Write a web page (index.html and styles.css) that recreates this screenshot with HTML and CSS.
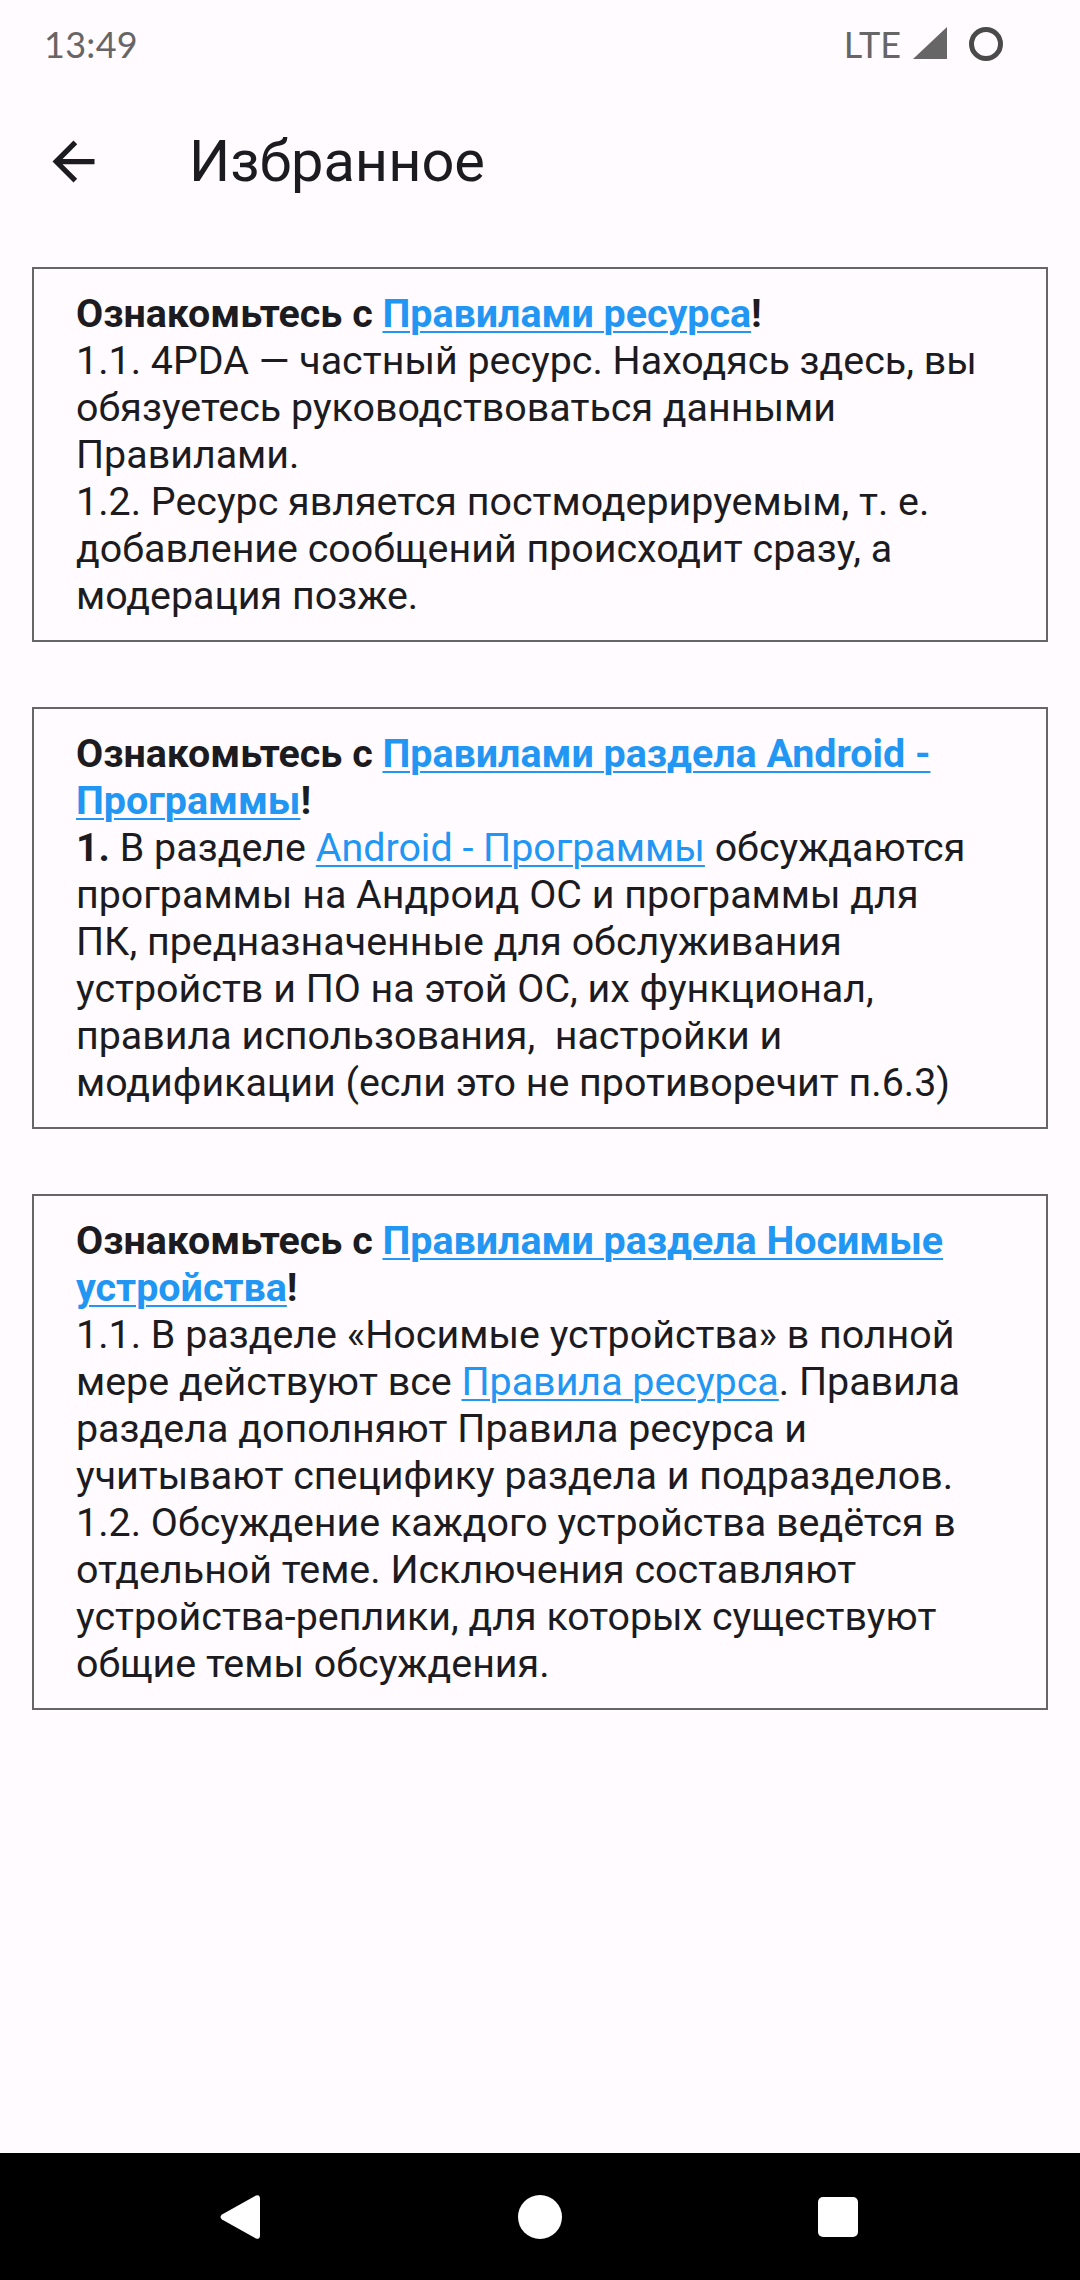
FILE: index.html
```html
<!DOCTYPE html>
<html lang="ru">
<head>
<meta charset="utf-8">
<title>Избранное</title>
<link rel="stylesheet" href="styles.css">
</head>
<body>
<div class="screen">
  <div class="statusbar">
    <span class="time">13:49</span>
    <div class="status-icons">
      <span class="lte">LTE</span>
      <svg class="signal" width="34" height="32" viewBox="0 0 34 32"><path d="M34 0 L34 32 L0 32 Z" fill="#666"/></svg>
      <svg class="battery" width="36" height="36" viewBox="0 0 36 36"><circle cx="18" cy="18" r="14.5" fill="none" stroke="#4a4a4a" stroke-width="5"/></svg>
    </div>
  </div>
  <div class="toolbar">
    <div class="nav-icon">
      <svg width="63" height="63" viewBox="0 0 24 24"><path d="M20 11H7.83l5.59-5.59L12 4l-8 8 8 8 1.41-1.41L7.83 13H20v-2z" fill="#1c1b1f"/></svg>
    </div>
    <h1 class="title">Избранное</h1>
  </div>
  <main class="content">
    <section class="card">
      <p><b>Ознакомьтесь с <a href="#">Правилами ресурса</a>!</b><br>
      1.1. 4PDA — частный ресурс. Находясь здесь, вы обязуетесь руководствоваться данными Правилами.<br>
      1.2. Ресурс является постмодерируемым, т. е. добавление сообщений происходит сразу, а модерация позже.</p>
    </section>
    <section class="card">
      <p><b>Ознакомьтесь с <a href="#">Правилами раздела Android - Программы</a>!</b><br>
      <b>1.</b> В разделе <a href="#">Android - Программы</a> обсуждаются программы на Андроид ОС и программы для ПК, предназначенные для обслуживания устройств и ПО на этой ОС, их функционал, правила использования,&nbsp; настройки и модификации (если это не противоречит п.6.3)</p>
    </section>
    <section class="card">
      <p><b>Ознакомьтесь с <a href="#">Правилами раздела Носимые устройства</a>!</b><br>
      1.1. В разделе «Носимые устройства» в полной мере действуют все <a href="#">Правила ресурса</a>. Правила раздела дополняют Правила ресурса и учитывают специфику раздела и подразделов.<br>
      1.2. Обсуждение каждого устройства ведётся в отдельной теме. Исключения составляют устройства-реплики, для которых существуют общие темы обсуждения.</p>
    </section>
  </main>
  <div class="navbar">
    <svg class="nav-back" width="42" height="46" viewBox="0 0 42 46"><path d="M37 1.5 Q41 0 41 5 L41 41 Q41 46 37 44.5 L3 25.5 Q0 23 3 20.5 Z" fill="#fff"/></svg>
    <svg class="nav-home" width="44" height="44" viewBox="0 0 44 44"><circle cx="22" cy="22" r="22" fill="#fff"/></svg>
    <svg class="nav-recent" width="40" height="40" viewBox="0 0 40 40"><rect x="0" y="0" width="40" height="40" rx="5" fill="#fff"/></svg>
  </div>
</div>
</body>
</html>
```

FILE: styles.css
```css
* { box-sizing: border-box; }
html, body { margin: 0; padding: 0; }
body {
  background: #fffbfe;
  font-family: Roboto, "Noto Sans", sans-serif;
  color: #1c1b1f;
}
.screen {
  width: 1080px;
  height: 2280px;
  display: flex;
  flex-direction: column;
}
.statusbar {
  height: 88px;
  flex: none;
  display: flex;
  align-items: center;
  justify-content: space-between;
  padding: 0 76px 0 44px;
}
.time {
  font-family: Lato, Roboto, sans-serif;
  font-size: 36px;
  color: #666;
  letter-spacing: 0.3px;
}
.status-icons {
  display: flex;
  align-items: center;
}
.lte {
  font-family: Lato, Roboto, sans-serif;
  font-size: 36px;
  color: #666;
  margin-right: 12px;
}
.signal { margin-right: 21px; margin-top: -2px; }
.toolbar {
  height: 147px;
  flex: none;
  display: flex;
  align-items: center;
}
.nav-icon {
  width: 63px;
  height: 63px;
  margin-left: 42px;
  display: flex;
}
.title {
  margin: 0 0 0 84px;
  font-size: 57.75px;
  font-weight: 400;
  line-height: 1;
  color: #1c1b1f;
}
.content {
  flex: 1;
  padding: 32px 32px 0;
  display: flex;
  flex-direction: column;
  gap: 65px;
}
.card {
  border: 2px solid #666;
  padding: 21px 62px 21px 42px;
}
.card p {
  margin: 0;
  font-size: 39.4px;
  line-height: 47px;
  color: #1c1b1f;
}
.card b { font-weight: 700; }
.card a {
  color: #2196f3;
  text-decoration: underline;
  text-decoration-thickness: 2px;
  text-underline-offset: 4px;
}
.navbar {
  height: 127px;
  flex: none;
  background: #000;
  display: flex;
  align-items: center;
  justify-content: space-between;
  padding: 0 222px 0 219px;
}
```
